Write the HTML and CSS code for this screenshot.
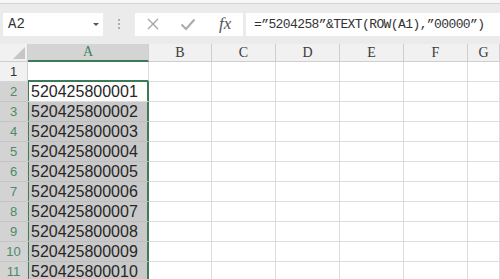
FILE: index.html
```html
<!DOCTYPE html>
<html lang="zh">
<head>
  <meta charset="UTF-8" />
  <title>Sheet</title>
  <link rel="stylesheet" href="styles.css">
</head>
<body>

  <div class="topbar"></div>

  <!-- formula bar -->
  <div class="formula-bar">
    <div class="namebox">
      <span>A2</span>
      <span class="caret"></span>
    </div>
    <div class="grip">
      <svg width="4" height="12" viewBox="0 0 4 12"><circle cx="2" cy="2" r="1" fill="#9a9a9a"/><circle cx="2" cy="6" r="1" fill="#9a9a9a"/><circle cx="2" cy="10" r="1" fill="#9a9a9a"/></svg>
    </div>
    <div class="fx-box">
      <svg class="ico" width="14" height="14" viewBox="0 0 14 14"><path d="M2 2 L12 12 M12 2 L2 12" stroke="#a4a4a4" stroke-width="1.3" fill="none"/></svg>
      <svg class="ico" width="16" height="14" viewBox="0 0 16 14"><path d="M1.5 7.5 L6 12 L14.5 2.5" stroke="#ababab" stroke-width="2" fill="none"/></svg>
      <span class="fx">fx</span>
    </div>
    <div class="formula">=”5204258”&amp;TEXT(ROW(A1),”00000”)</div>
  </div>

  <!-- sheet -->
  <div class="sheet" id="sheet">
    <div class="hd corner"><span class="tri"></span></div>
    <div class="hd col-sel">A</div>
    <div class="hd">B</div>
    <div class="hd">C</div>
    <div class="hd">D</div>
    <div class="hd">E</div>
    <div class="hd">F</div>
    <div class="hd">G</div>
  </div>

  <script>
    const sheet = document.getElementById("sheet");
    for (let r = 1; r <= 11; r++) {
      const sel = r >= 2;
      let html = `<div class="rn${sel ? " rn-sel" : ""}">${r}</div>`;
      if (r === 1) {
        html += `<div class="cell a1"></div>`;
      } else {
        const num = "5204258" + String(r - 1).padStart(5, "0");
        html += `<div class="cell sel${r === 2 ? " active" : ""}">${num}</div>`;
      }
      for (let c = 0; c < 6; c++) html += `<div class="cell"></div>`;
      sheet.insertAdjacentHTML("beforeend", html);
    }
  </script>

</body>
</html>
```

FILE: styles.css
```css
body {
  margin: 0;
  width: 500px;
  height: 279px;
  overflow: hidden;
  background: #ffffff;
  font-family: 'Liberation Sans', sans-serif;
}

.topbar {
  height: 3px;
  background: #f7f7f7;
  border-bottom: 1px solid #d4d4d4;
}

.formula-bar {
  display: flex;
  align-items: center;
  height: 40px;
  padding-left: 3px;
  background: #ebebeb;
}

.namebox {
  width: 100px;
  height: 23px;
  box-sizing: border-box;
  padding: 0 4px 0 5px;
  background: #ffffff;
  display: flex;
  align-items: center;
  justify-content: space-between;
  font-family: 'Liberation Mono', monospace;
  font-size: 14px;
  color: #333;
}

.caret {
  width: 0;
  height: 0;
  border-left: 3px solid transparent;
  border-right: 3px solid transparent;
  border-top: 3px solid #555;
}

.grip {
  width: 32px;
  display: flex;
  justify-content: center;
  align-items: center;
}

.fx-box {
  width: 108px;
  height: 23px;
  background: #ffffff;
  display: flex;
  align-items: center;
  padding-left: 11px;
  box-sizing: border-box;
  gap: 20px;
}

.fx {
  font-family: 'Liberation Serif', serif;
  font-style: italic;
  font-size: 17px;
  color: #555;
  margin-left: 3px;
}

.formula {
  flex: 1;
  height: 23px;
  margin-left: 3px;
  background: #ffffff;
  display: flex;
  align-items: center;
  padding-left: 8px;
  font-family: 'Liberation Mono', monospace;
  font-size: 13px;
  letter-spacing: -0.6px;
  color: #333;
  white-space: nowrap;
}

.sheet {
  display: grid;
  grid-template-columns: 28px 121px 63px 64px 64px 64px 64px 32px;
  grid-template-rows: 18px;
  grid-auto-rows: 20px;
}

.sheet > div {
  box-sizing: border-box;
  border-right: 1px solid #dcdcdc;
  border-bottom: 1px solid #dcdcdc;
}

.hd {
  background: #f1f1f1;
  display: flex;
  align-items: center;
  justify-content: center;
  font-family: 'Liberation Serif', serif;
  font-size: 14px;
  color: #3a3a3a;
  border-right-color: #cfcfcf !important;
  border-bottom-color: #cfcfcf !important;
}

.corner {
  justify-content: flex-end;
  align-items: flex-end;
  padding: 0 2px 2px 0;
}

.tri {
  width: 0;
  height: 0;
  border-left: 12px solid transparent;
  border-bottom: 12px solid #c6c6c6;
}

.col-sel {
  background: #d4d4d4;
  color: #3f8160;
  border-bottom: 2px solid #3c7a58 !important;
}

.rn {
  background: #f1f1f1;
  display: flex;
  align-items: center;
  justify-content: center;
  font-size: 13px;
  color: #333;
  border-right-color: #cfcfcf !important;
  border-bottom-color: #d6d6d6 !important;
}

.rn-sel {
  background: #d3d3d3;
  color: #4c8a69;
  border-bottom-color: #c4c4c4 !important;
}

.cell {
  display: flex;
  align-items: center;
  padding-left: 3px;
  font-size: 16px;
  color: #262626;
}

.a1 {
  border-bottom: 2px solid #3c7a58 !important;
}

.sel {
  background: #c9c9c9;
  border-right: 1px solid #3c7a58 !important;
  border-bottom-color: #bdbdbd !important;
  box-shadow: inset 1px 0 0 #3c7a58, inset -1px 0 0 #3c7a58;
}

.sel.active {
  background: #ffffff;
  border-bottom-color: #dcdcdc !important;
}
```
